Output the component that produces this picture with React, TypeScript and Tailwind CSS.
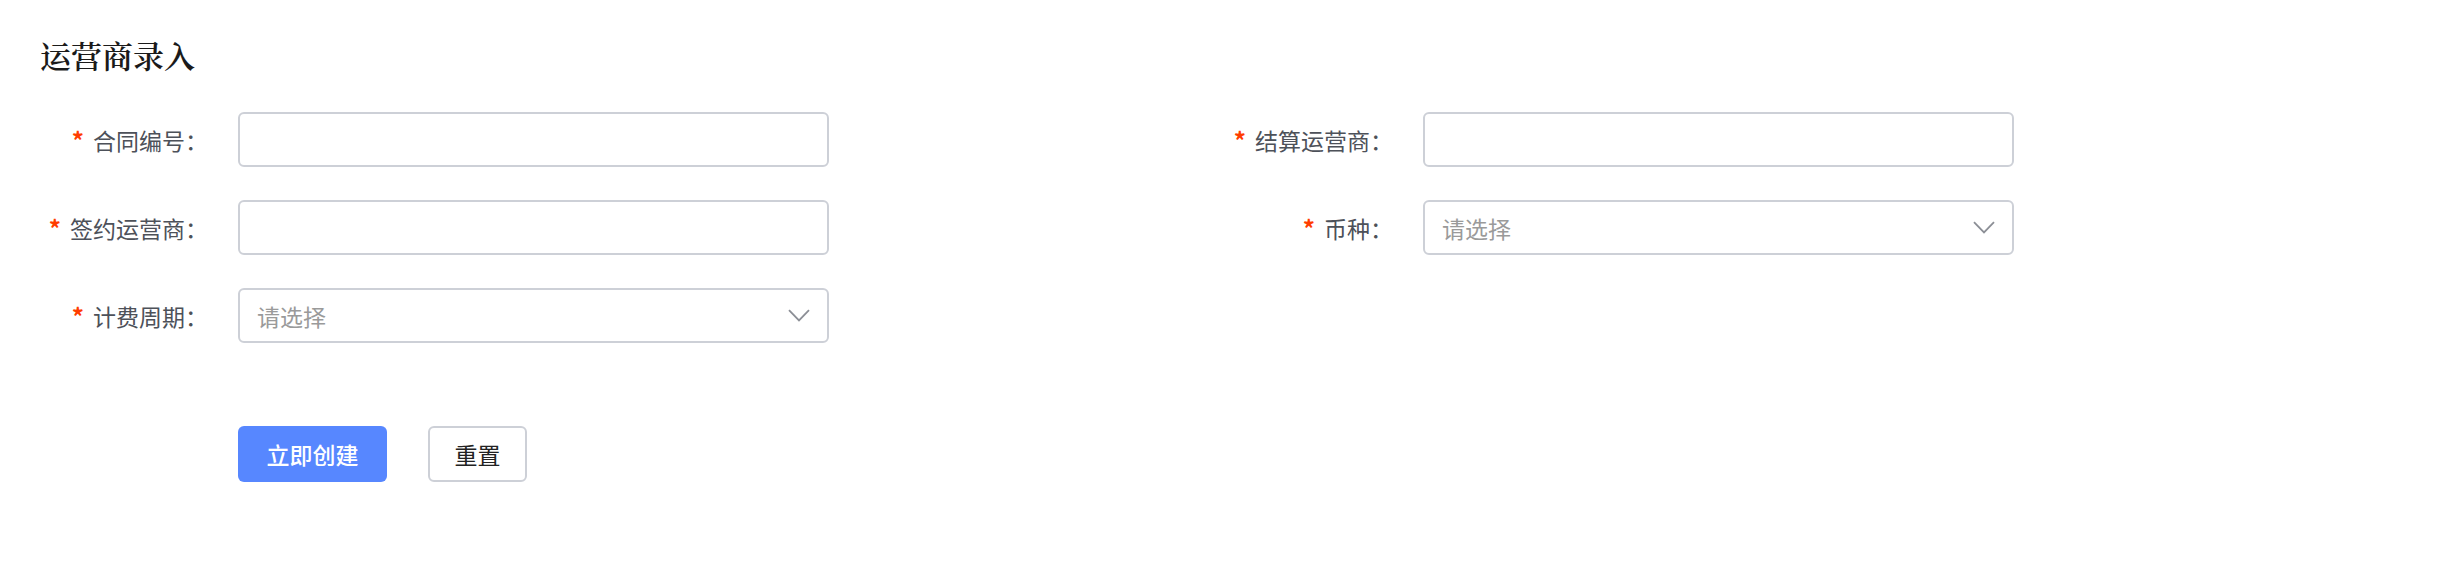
import React from 'react';

const sans = "font-['Noto_Sans_CJK_SC','Noto_Sans',sans-serif]";

interface FieldProps {
  label: string;
  children: React.ReactNode;
}

function Field({ label, children }: FieldProps) {
  return (
    <div className="flex items-center">
      <label className={`w-[198px] shrink-0 pr-[30px] text-right text-[23px] leading-[30px] text-[#4d5159] ${sans}`}>
        <span className="mr-[9px] text-[24px] font-bold text-[#ff3d00]">*</span>
        {label}：
      </label>
      {children}
    </div>
  );
}

function TextInput() {
  return (
    <input
      type="text"
      className={`h-[55px] w-[591px] rounded-[6px] border-2 border-[#cdd0d7] bg-white px-[17px] text-[23px] outline-none ${sans}`}
    />
  );
}

function SelectBox() {
  return (
    <div className="flex h-[55px] w-[591px] items-center justify-between rounded-[6px] border-2 border-[#cdd0d7] bg-white pl-[17px] pr-[17px]">
      <span className={`text-[23px] leading-[30px] text-[#9a9a9a] ${sans}`}>请选择</span>
      <svg width="22" height="13" viewBox="0 0 22 13" fill="none">
        <path d="M1 1.2 L11 11.5 L21 1.2" stroke="#8c8f96" strokeWidth="1.8" />
      </svg>
    </div>
  );
}

export default function App() {
  return (
    <div className="bg-white pb-[90px] pl-[40px] pt-[35px]">
      <h1 className={`text-[31px] leading-[40px] font-semibold text-[#1a1a1a] font-['Noto_Serif_CJK_SC','Noto_Sans_CJK_SC',serif]`}>
        运营商录入
      </h1>

      <div className="mt-[37px] grid grid-cols-[1185px_1185px] gap-y-[33px]">
        <Field label="合同编号">
          <TextInput />
        </Field>
        <Field label="结算运营商">
          <TextInput />
        </Field>
        <Field label="签约运营商">
          <TextInput />
        </Field>
        <Field label="币种">
          <SelectBox />
        </Field>
        <Field label="计费周期">
          <SelectBox />
        </Field>
      </div>

      <div className="ml-[198px] mt-[83px] flex gap-[41px]">
        <button className={`h-[56px] w-[149px] rounded-[6px] bg-[#5787ff] text-[23px] font-medium text-white ${sans}`}>
          立即创建
        </button>
        <button className={`h-[56px] w-[99px] rounded-[6px] border-2 border-[#cdd0d7] bg-white text-[23px] text-[#222] ${sans}`}>
          重置
        </button>
      </div>
    </div>
  );
}
